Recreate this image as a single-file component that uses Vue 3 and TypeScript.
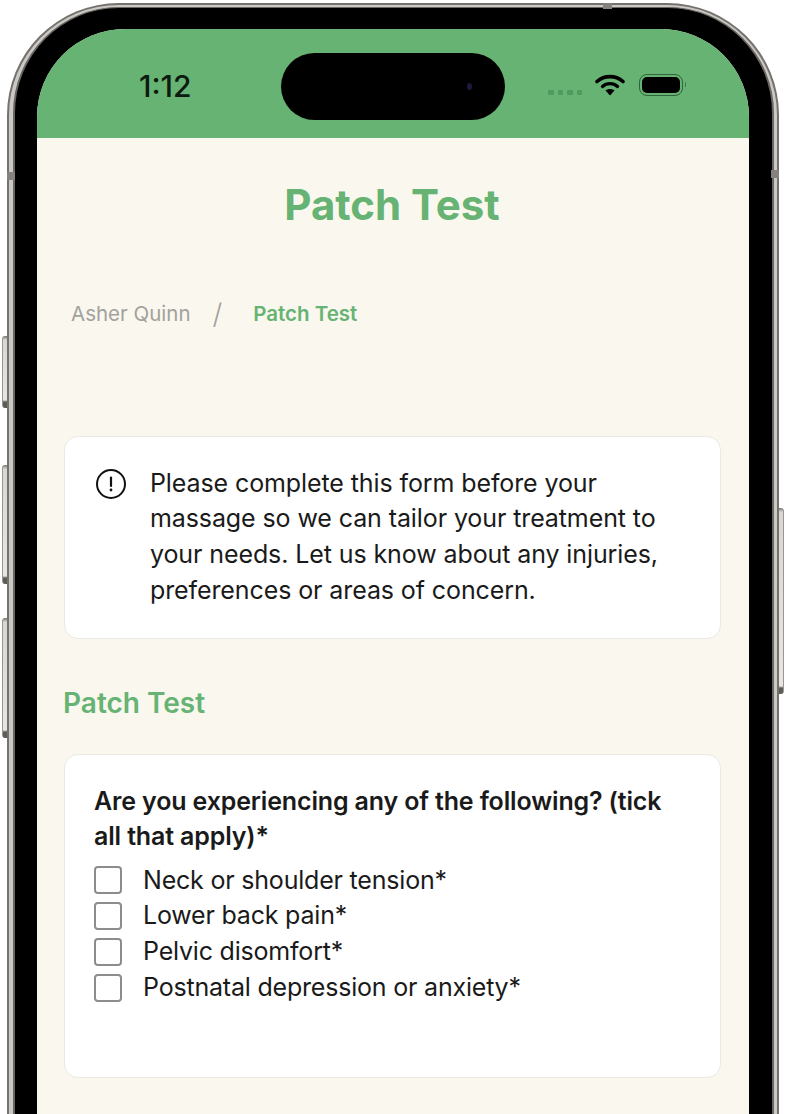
<script setup lang="ts">
const lines: string[] = [
  'Neck or shoulder tension*',
  'Lower back pain*',
  'Pelvic disomfort*',
  'Postnatal depression or anxiety*',
]
</script>

<template>
  <div class="stage">
    <span class="btn btn-l1"></span>
    <span class="btn btn-l2"></span>
    <span class="btn btn-l3"></span>
    <span class="btn btn-r"></span>
    <div class="metal">
      <div class="rim">
        <div class="bezel">
          <div class="screen">
            <header class="status">
              <span class="time">1:12</span>
              <div class="island"><span class="lens"></span></div>
              <div class="indicators">
                <div class="dots"><i></i><i></i><i></i><i></i></div>
                <svg class="wifi" width="30" height="22" viewBox="0 0 30 22" fill="none">
                  <path d="M2 7.500C9.500 1 20.500 1 28 7.500" stroke="#000" stroke-width="3.600" stroke-linecap="round" />
                  <path d="M7.500 12.500c4.400-3.800 10.600-3.800 15 0" stroke="#000" stroke-width="3.400" stroke-linecap="round" />
                  <path d="M10.500 16.500c2.600-2 6.400-2 9 0L15 21.500z" fill="#000" />
                </svg>
                <div class="battery"><div class="cell"></div></div>
                <span class="cap"></span>
              </div>
            </header>
            <main class="content">
              <h1 class="title">Patch Test</h1>
              <nav class="crumbs">
                <span class="crumb-a">Asher Quinn</span>
                <span class="slash">/</span>
                <span class="crumb-b">Patch Test</span>
              </nav>
              <section class="card notice">
                <svg class="alert" width="32" height="32" viewBox="0 0 32 32" fill="none">
                  <circle cx="16" cy="16" r="14" stroke="#111" stroke-width="2" />
                  <path d="M16 9.500v8.500" stroke="#111" stroke-width="2.200" stroke-linecap="round" />
                  <circle cx="16" cy="22" r="1.400" fill="#111" />
                </svg>
                <p>Please complete this form before your massage so we can tailor your treatment to your needs. Let us know about any injuries, preferences or areas of concern.</p>
              </section>
              <h2 class="section">Patch Test</h2>
              <section class="card form">
                <p class="question">Are you experiencing any of the following? (tick all that apply)*</p>
                <label v-for="line in lines" :key="line" class="row">
                  <span class="box"></span>
                  <span>{{ line }}</span>
                </label>
              </section>
            </main>
          </div>
        </div>
      </div>
      <span class="band band-top"></span>
      <span class="band band-left"></span>
      <span class="band band-right"></span>
    </div>
  </div>
</template>

<style scoped>
.stage {
  position: relative;
  width: 786px;
  height: 1114px;
  overflow: hidden;
  background: #fff;
  font-family: Inter, "Noto Sans", sans-serif;
  color: #1a1a1a;
}
.metal {
  position: relative;
  margin: 3px 0 0 7px;
  width: 772px;
  height: 1300px;
  padding: 1.500px 2px;
  box-sizing: border-box;
  border-radius: 112px;
  background: #75726d;
}
.rim {
  height: 100%;
  padding: 2.500px 3.500px;
  box-sizing: border-box;
  border-radius: 110px;
  background: #cbc9c5;
}
.bezel {
  height: 100%;
  padding: 20.500px 22.500px;
  box-sizing: border-box;
  background: #000;
  border: 2px solid #6a6762;
  border-top-width: 1.500px;
  border-radius: 106px;
}
.screen {
  height: 100%;
  border-radius: 88px 88px 0 0;
  overflow: hidden;
  background: #faf7ef;
}
.band {
  position: absolute;
  background: #85827d;
}
.band-top { left: 596px; top: 0; width: 9px; height: 6px; }
.band-left { left: 0; top: 169px; width: 8px; height: 8px; }
.band-right { right: 0; top: 167px; width: 8px; height: 8px; }
.status {
  position: relative;
  height: 109px;
  background: #66b373;
}
.time {
  position: absolute;
  left: 102px;
  top: 39px;
  font-size: 30px;
  line-height: 36px;
  font-weight: 500;
  color: #0d1a10;
}
.island {
  position: absolute;
  left: 244px;
  top: 24px;
  width: 224px;
  height: 67px;
  border-radius: 34px;
  background: #000;
}
.lens {
  position: absolute;
  left: 186px;
  top: 30px;
  width: 5px;
  height: 7px;
  border-radius: 50%;
  background: #1a1a3a;
}
.indicators {
  position: absolute;
  left: 510px;
  top: 45px;
  display: flex;
  align-items: center;
}
.dots {
  display: flex;
  gap: 4px;
  margin: 16px 13px 0 1px;
}
.dots i {
  width: 5.500px;
  height: 5.500px;
  border-radius: 1px;
  background: #4f9a5e;
}
.wifi {
  margin-right: 14px;
}
.battery {
  width: 44px;
  height: 22px;
  padding: 2px;
  box-sizing: border-box;
  border: 1px solid #2f6339;
  border-radius: 8px;
}
.cell {
  height: 100%;
  background: #000;
  border-radius: 5px;
}
.cap {
  width: 1.500px;
  height: 5px;
  margin-left: 1.500px;
  background: #3d7a4a;
  border-radius: 1px;
}
.content {
  padding: 0 29px 0 27px;
}
.title {
  margin: 40px 0 0;
  text-align: center;
  font-size: 42px;
  line-height: 54px;
  font-weight: 700;
  color: #66b373;
}
.crumbs {
  display: flex;
  align-items: center;
  margin-top: 62px;
  height: 40px;
  padding-left: 7px;
  font-size: 20.500px;
}
.crumb-a {
  color: #a3a19c;
}
.slash {
  margin: 0 31px 0 22px;
  font-size: 28px;
  color: #a3a19c;
  font-weight: 300;
}
.crumb-b {
  color: #66b373;
  font-weight: 600;
}
.card {
  background: #fff;
  border: 1px solid #ebe9e4;
  border-radius: 14px;
  box-sizing: border-box;
  font-size: 25px;
  line-height: 35.800px;
  letter-spacing: -0.100px;
  font-weight: 430;
}
.notice {
  display: flex;
  gap: 23px;
  margin: 102px 0 0 0;
  width: 657px;
  height: 203px;
  padding: 29px 40px 0 30px;
}
.notice p {
  margin: 0;
}
.alert {
  flex: none;
  margin-top: 2px;
}
.section {
  margin: 43px 0 0 -1px;
  font-size: 28px;
  line-height: 42px;
  font-weight: 600;
  color: #66b373;
}
.form {
  margin-top: 30px;
  width: 657px;
  height: 324px;
  padding: 29px 40px 0 29px;
}
.question {
  margin: 0 0 7.500px;
  font-weight: 600;
  letter-spacing: -0.150px;
}
.row {
  display: flex;
  align-items: center;
  gap: 21px;
  height: 35.800px;
  letter-spacing: -0.200px;
}
.box {
  flex: none;
  width: 28px;
  height: 28px;
  box-sizing: border-box;
  border: 2px solid #8c8c8c;
  border-radius: 4px;
}
.btn {
  position: absolute;
  width: 6px;
  background: linear-gradient(180deg, #77746f 0, #d9d7d3 4px, #e8e6e2 calc(100% - 8px), #5f5c58 calc(100% - 6px), #5f5c58 100%);
  border-left: 1px solid #9a9792;
  box-sizing: border-box;
  border-radius: 3px 0 0 3px;
}
.btn-l1 { left: 2px; top: 336px; height: 72px; }
.btn-l2 { left: 2px; top: 465px; height: 119px; }
.btn-l3 { left: 2px; top: 618px; height: 120px; }
.btn-r {
  left: 778px;
  top: 508px;
  height: 186px;
  border-left: 0;
  border-right: 1px solid #9a9792;
  border-radius: 0 3px 3px 0;
}
</style>
